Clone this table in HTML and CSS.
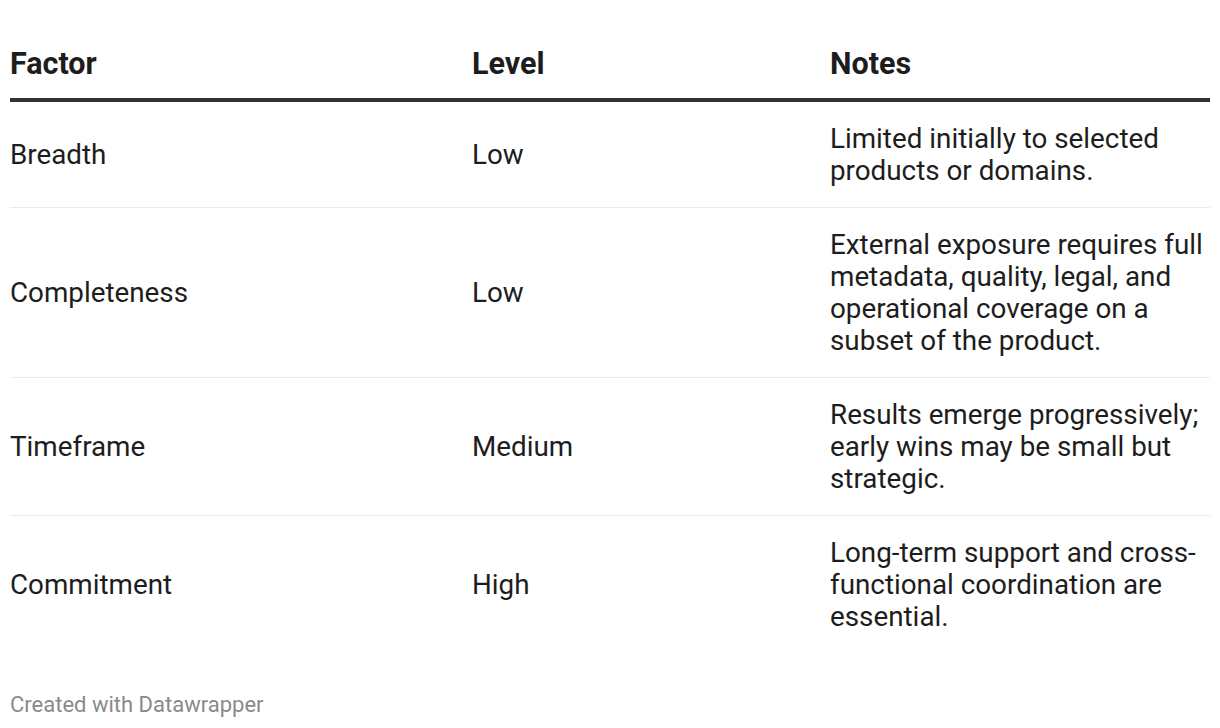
FILE: index.html
```html
<!DOCTYPE html>
<html lang="en">
<head>
<meta charset="utf-8">
<title>Table</title>
<link rel="stylesheet" href="styles.css">
</head>
<body>
<div class="chart">
  <table class="dw-table">
    <colgroup>
      <col class="col-factor">
      <col class="col-level">
      <col class="col-notes">
    </colgroup>
    <thead>
      <tr>
        <th>Factor</th>
        <th>Level</th>
        <th>Notes</th>
      </tr>
    </thead>
    <tbody>
      <tr>
        <td>Breadth</td>
        <td>Low</td>
        <td>Limited initially to selected products or domains.</td>
      </tr>
      <tr>
        <td>Completeness</td>
        <td>Low</td>
        <td>External exposure requires full metadata, quality, legal, and operational coverage on a subset of the product.</td>
      </tr>
      <tr>
        <td>Timeframe</td>
        <td>Medium</td>
        <td>Results emerge progressively; early wins may be small but strategic.</td>
      </tr>
      <tr>
        <td>Commitment</td>
        <td>High</td>
        <td>Long-term support and cross-functional coordination are essential.</td>
      </tr>
    </tbody>
  </table>
  <div class="footer">Created with Datawrapper</div>
</div>
</body>
</html>
```

FILE: styles.css
```css
html, body {
  margin: 0;
  padding: 0;
  background: #ffffff;
}

body {
  font-family: Roboto, "Liberation Sans", Arial, sans-serif;
  color: #1d1d1d;
}

.chart {
  padding: 45px 10px 0 10px;
}

.dw-table {
  width: 1200px;
  border-collapse: collapse;
  table-layout: fixed;
}

.col-factor { width: 462px; }
.col-level { width: 358px; }
.col-notes { width: 380px; }

.dw-table th {
  text-align: left;
  font-weight: 700;
  font-size: 30.5px;
  line-height: 38px;
  padding: 0 0 15px 0;
  border-bottom: 4px solid #333333;
  vertical-align: bottom;
}

.dw-table td {
  font-size: 27.8px;
  line-height: 32px;
  padding: 21px 0 20px 0;
  vertical-align: middle;
  border-bottom: 1px solid #ebebeb;
}

.dw-table tbody tr:last-child td {
  border-bottom: none;
}

.footer {
  margin-top: 39px;
  font-size: 22px;
  line-height: 26px;
  color: #8a8a8a;
}
```
